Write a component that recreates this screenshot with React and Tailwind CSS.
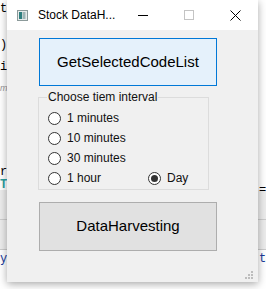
import React from "react";

const font = { fontFamily: '"Liberation Sans", Arial, sans-serif' };

function Radio({ checked, label }) {
  return (
    <div className="flex items-center h-[20px]">
      <span className="w-[13px] h-[13px] rounded-full border border-[#333] bg-white flex items-center justify-center">
        {checked && <span className="w-[7px] h-[7px] rounded-full bg-[#333]" />}
      </span>
      <span className="ml-[6px] text-[12px] text-[#111] leading-none">{label}</span>
    </div>
  );
}

export default function App() {
  return (
    <div className="relative w-[266px] h-[289px] bg-white overflow-hidden" style={font}>
      {/* editor background bits */}
      <div className="absolute left-0 top-[3px] text-[12px] font-mono text-black leading-none">t:</div>
      <div className="absolute left-[0px] top-[36px] text-[12px] font-mono text-black">)</div>
      <div className="absolute left-[0px] top-[58px] text-[12px] font-mono text-black">i</div>
      <div className="absolute left-[0px] top-[82px] text-[9px] italic text-[#999]">m</div>
      <div className="absolute left-[0px] top-[163px] text-[12px] font-mono text-black">r</div>
      <div className="absolute left-[0px] top-[176px] text-[12px] font-mono font-bold text-[#2aa0a0]">T</div>
      <div className="absolute left-0 top-[190px] w-[266px] h-[60px] bg-[#ececec] border-b border-[#ccc]">
        <div className="h-[30px] border-b border-[#ccc]" />
      </div>
      <div className="absolute left-[0px] top-[250px] text-[12px] font-mono text-[#1a3a9a]">y</div>
      <div className="absolute left-[259px] top-[181px] text-[12px] font-mono text-black">=</div>
      <div className="absolute left-[259px] top-[250px] text-[12px] font-mono text-[#1a3a9a]">t</div>

      {/* window */}
      <div className="absolute left-[7px] top-0 w-[251px] h-[282px] bg-[#f0f0f0] flex flex-col shadow-[0_2px_8px_rgba(0,0,0,0.35)]">
        <div className="h-[30px] bg-white flex items-center shrink-0">
          <svg className="ml-[10px]" width="11" height="11" viewBox="0 0 11 11">
            <rect x="0.5" y="0.5" width="10" height="10" fill="#e8ecec" stroke="#8c9a9a" />
            <rect x="2" y="2" width="3" height="7" fill="#2f7f7f" />
            <rect x="5.5" y="2" width="3" height="7" fill="#9fb5b5" />
          </svg>
          <span className="ml-[10px] text-[12px] text-black">Stock DataH...</span>
          <div className="ml-auto flex h-full">
            <div className="w-[46px] h-full flex items-center justify-center">
              <div className="w-[10px] h-[1px] bg-black" />
            </div>
            <div className="w-[46px] h-full flex items-center justify-center">
              <div className="w-[10px] h-[10px] border border-[#c4c4c4]" />
            </div>
            <div className="w-[46px] h-full flex items-center justify-center">
              <svg width="11" height="11" viewBox="0 0 11 11">
                <path d="M0.5 0.5 L10.5 10.5 M10.5 0.5 L0.5 10.5" stroke="#000" strokeWidth="1" />
              </svg>
            </div>
          </div>
        </div>

        <div className="flex flex-col pl-[32px] pt-[8px]">
          <div className="w-[178px] h-[48px] bg-[#e5f1fb] border border-[#0078d7] flex items-center justify-center text-[15px] text-black">
            GetSelectedCodeList
          </div>

          <div className="relative mt-[11px] ml-[-1px] w-[171px] h-[93px] border border-[#dcdcdc]">
            <span className="absolute left-[8px] top-[-7px] bg-[#f0f0f0] px-[1px] text-[12px] leading-none text-[#111]">
              Choose tiem interval
            </span>
            <div className="flex flex-col pl-[9px] pt-[10px]">
              <Radio label="1 minutes" />
              <Radio label="10 minutes" />
              <Radio label="30 minutes" />
              <div className="flex">
                <div className="w-[100px]"><Radio label="1 hour" /></div>
                <Radio checked label="Day" />
              </div>
            </div>
          </div>

          <div className="mt-[12px] w-[178px] h-[49px] bg-[#e1e1e1] border border-[#adadad] flex items-center justify-center text-[15px] text-black">
            DataHarvesting
          </div>
        </div>

        <div className="mt-auto flex justify-end pr-[5px] pb-[3px]">
          <svg width="8" height="8" viewBox="0 0 8 8">
            <rect x="6" y="0" width="2" height="2" fill="#bdbdbd" />
            <rect x="3" y="3" width="2" height="2" fill="#bdbdbd" />
            <rect x="6" y="3" width="2" height="2" fill="#bdbdbd" />
            <rect x="0" y="6" width="2" height="2" fill="#bdbdbd" />
            <rect x="3" y="6" width="2" height="2" fill="#bdbdbd" />
            <rect x="6" y="6" width="2" height="2" fill="#bdbdbd" />
          </svg>
        </div>
      </div>
    </div>
  );
}
